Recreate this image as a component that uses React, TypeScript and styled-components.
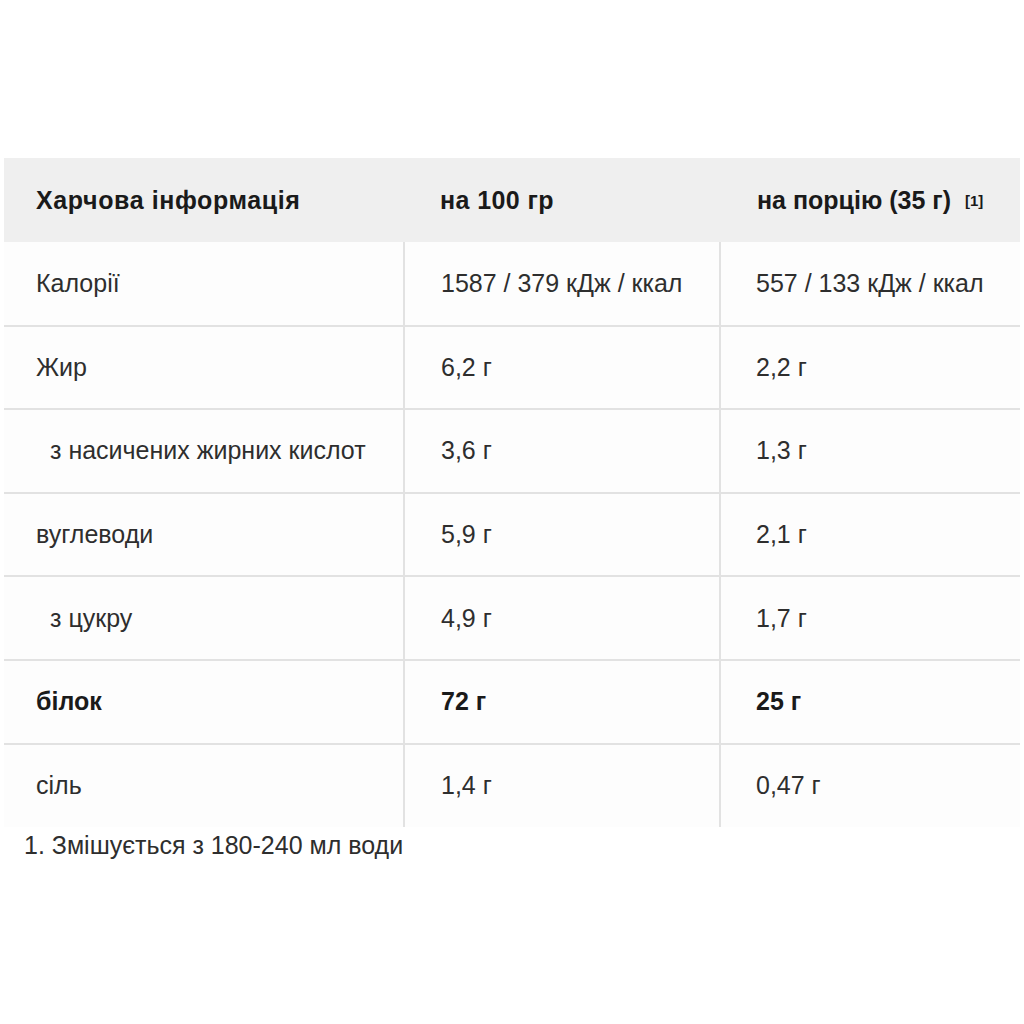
import styled, { createGlobalStyle } from 'styled-components';

const GlobalStyle = createGlobalStyle`
  html, body {
    margin: 0;
    padding: 0;
    background: #fff;
  }
  body {
    font-family: "Liberation Sans", Arial, sans-serif;
    color: #222;
  }
`;

const Page = styled.div`
  width: 1024px;
  height: 1024px;
  padding: 158px 4px 0 4px;
  box-sizing: border-box;
`;

const Table = styled.table`
  width: 1016px;
  border-collapse: collapse;
  table-layout: fixed;
  font-size: 25px;
`;

const HeadCell = styled.th<{ $pad: number; $spacing?: number }>`
  background: #efefef;
  height: 84px;
  padding: 0 0 0 ${(p) => p.$pad}px;
  text-align: left;
  font-weight: bold;
  letter-spacing: ${(p) => p.$spacing ?? 0}px;
  color: #1a1a1a;
  white-space: nowrap;
  box-sizing: border-box;
`;

const Row = styled.tr<{ $last?: boolean }>`
  border-bottom: ${(p) => (p.$last ? 'none' : '2px solid #e2e2e2')};
`;

const Cell = styled.td<{ $pad: number; $bold?: boolean; $indent?: boolean; $line?: boolean }>`
  height: 83.6px;
  padding: 0 0 0 ${(p) => p.$pad + (p.$indent ? 14 : 0)}px;
  background: #fdfdfd;
  font-weight: ${(p) => (p.$bold ? 'bold' : 'normal')};
  color: ${(p) => (p.$bold ? '#1a1a1a' : '#2e2e2e')};
  border-left: ${(p) => (p.$line ? '2px solid #e2e2e2' : 'none')};
  white-space: nowrap;
  box-sizing: border-box;
`;

const Ref = styled.span`
  font-size: 15px;
  font-weight: bold;
  margin-left: 14px;
  vertical-align: 3px;
`;

const Footnote = styled.div`
  font-size: 25px;
  color: #2e2e2e;
  padding: 4px 0 0 20px;
`;

type Item = { name: string; per100: string; portion: string; bold?: boolean; indent?: boolean };

const rows: Item[] = [
  { name: 'Калорії', per100: '1587 / 379 кДж / ккал', portion: '557 / 133 кДж / ккал' },
  { name: 'Жир', per100: '6,2 г', portion: '2,2 г' },
  { name: 'з насичених жирних кислот', per100: '3,6 г', portion: '1,3 г', indent: true },
  { name: 'вуглеводи', per100: '5,9 г', portion: '2,1 г' },
  { name: 'з цукру', per100: '4,9 г', portion: '1,7 г', indent: true },
  { name: 'білок', per100: '72 г', portion: '25 г', bold: true },
  { name: 'сіль', per100: '1,4 г', portion: '0,47 г' },
];

export default function App() {
  return (
    <Page>
      <GlobalStyle />
      <Table>
        <colgroup>
          <col style={{ width: 400 }} />
          <col style={{ width: 316 }} />
          <col style={{ width: 300 }} />
        </colgroup>
        <thead>
          <tr>
            <HeadCell $pad={32} $spacing={0.6}>Харчова інформація</HeadCell>
            <HeadCell $pad={36} $spacing={0.4}>на 100 гр</HeadCell>
            <HeadCell $pad={37}>
              на порцію (35 г)<Ref>[1]</Ref>
            </HeadCell>
          </tr>
        </thead>
        <tbody>
          {rows.map((r, i) => (
            <Row key={r.name} $last={i === rows.length - 1}>
              <Cell $pad={32} $bold={r.bold} $indent={r.indent}>{r.name}</Cell>
              <Cell $pad={36} $bold={r.bold} $line>{r.per100}</Cell>
              <Cell $pad={35} $bold={r.bold} $line>{r.portion}</Cell>
            </Row>
          ))}
        </tbody>
      </Table>
      <Footnote>1. Змішується з 180-240 мл води</Footnote>
    </Page>
  );
}
